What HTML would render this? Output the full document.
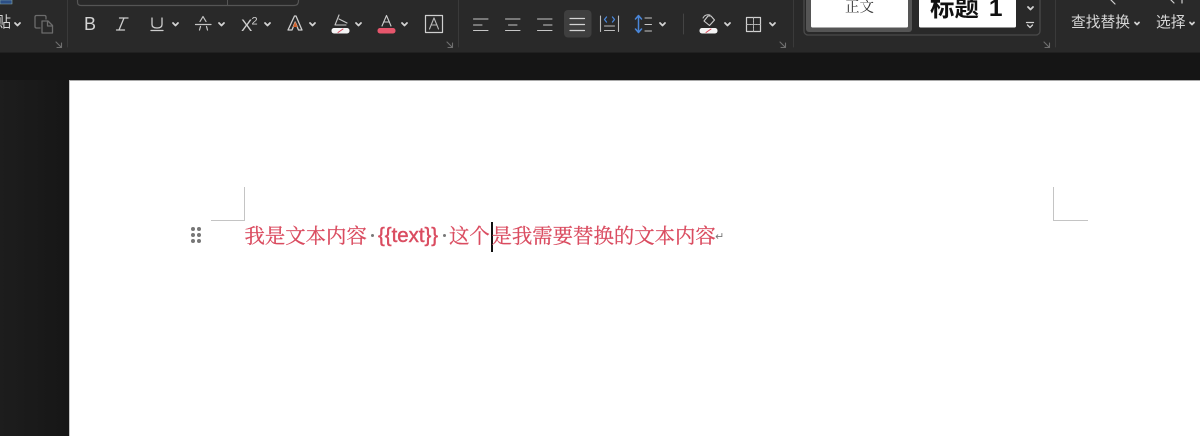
<!DOCTYPE html>
<html lang="zh">
<head>
<meta charset="utf-8">
<title>文档</title>
<style>
html,body{margin:0;padding:0;width:1200px;height:436px;overflow:hidden;background:#181818}
body{position:relative;font-family:"Liberation Sans","Noto Sans CJK SC",sans-serif}
.a{position:absolute;white-space:nowrap}
#bar{left:0;top:0;width:1200px;height:52px;background:#292929;border-bottom:1px solid #202020}
#gap{left:0;top:53px;width:1200px;height:27px;background:#151515}
#side{left:0;top:80px;width:69px;height:356px;background:linear-gradient(90deg,#1d1d1d,#191919 60%,#161616)}
#page{left:69px;top:80px;width:1131px;height:356px;background:#fff;border-top:1px solid #a9a9a9;border-left:1px solid #c5c5c5;box-sizing:border-box}
.t{color:#da4c60;font-family:"Liberation Serif","Noto Serif CJK SC",serif;font-size:20.4px;line-height:28px;top:223px;-webkit-text-stroke:.25px #da4c60}
.b{font-family:"Liberation Sans","Noto Sans CJK SC",sans-serif;font-size:20.4px;top:222px;color:#da4c60;line-height:28px;-webkit-text-stroke:.45px #da4c60}
.d{width:3px;height:3px;border-radius:50%;background:#777}
.ui{color:#d6d6d6;font-size:14.75px;line-height:20px}
svg{position:absolute;left:0;top:0}
</style>
</head>
<body>
<div class="a" id="bar"></div>
<div class="a" id="gap"></div>
<div class="a" id="side"></div>
<div class="a" id="page"></div>

<svg width="1200" height="90" viewBox="0 0 1200 90" fill="none" stroke-linecap="round" stroke-linejoin="round">
  <!-- separators -->
  <g stroke="#3a3a3a" stroke-width="1">
    <path d="M67.500 0V47M458.500 0V47M793.500 0V47M1055.500 0V47"/>
    <path d="M683.500 14V34" stroke="#444"/>
  </g>
  <!-- font box -->
  <path d="M77.500 0V2Q77.500 5.500 81 5.500H294Q298.500 5.500 298.500 1V0" stroke="#555" stroke-width="1.200"/>
  <path d="M227.500 0V5" stroke="#555"/>
  <!-- top-left stub -->
  <rect x="0" y="0" width="12" height="4" fill="#2c4f86" stroke="#8aa" stroke-width=".6"/>
  <!-- copy icon -->
  <g stroke="#6c6c6c" stroke-width="1.300">
    <path d="M40 28H36.500Q35 28 35 26.500V17Q35 15.500 36.500 15.500H44.500Q46 15.500 46 17V19"/>
    <path d="M42 21H48L52.500 25.500V33H42Z"/>
    <path d="M47.500 21V26H52.500"/>
  </g>
  <!-- dialog launchers -->
  <g stroke="#6f6f6f" stroke-width="1.100">
    <path d="M56 42L61.500 47.500M61.500 43V47.500H57"/>
    <path d="M447 42L452.500 47.500M452.500 43V47.500H448"/>
    <path d="M780 42L785.500 47.500M785.500 43V47.500H781"/>
    <path d="M1044 42L1049.500 47.500M1049.500 43V47.500H1045"/>
  </g>
  <!-- chevrons -->
  <g stroke="#d2d2d2" stroke-width="1.800">
    <path d="M15 23L17.500 25.500L20 23"/>
    <path d="M173 23L175.500 25.500L178 23"/>
    <path d="M219 23L221.500 25.500L224 23"/>
    <path d="M265 23L267.500 25.500L270 23"/>
    <path d="M310 23L312.500 25.500L315 23"/>
    <path d="M356 23L358.500 25.500L361 23"/>
    <path d="M402 23L404.500 25.500L407 23"/>
    <path d="M660 23L662.500 25.500L665 23"/>
    <path d="M725 23L727.500 25.500L730 23"/>
    <path d="M770 23L772.500 25.500L775 23"/>
    <path d="M1028 7L1030.500 9.500L1033 7"/>
    <path d="M1135 22.500L1137 24.500L1139 22.500"/>
    <path d="M1190 22.500L1192 24.500L1194 22.500"/>
  </g>
  <!-- italic -->
  <path d="M119 30L124 18M119.500 18H128M116.500 30H124.500" stroke="#cdcdcd" stroke-width="1.300"/>
  <!-- underline -->
  <path d="M152 18V24.500Q152 28 157 28Q162 28 162 24.500V18M151 30.500H163" stroke="#cdcdcd" stroke-width="1.300"/>
  <!-- strikethrough: split A -->
  <path d="M200 21.500L203 16.500L206 21.500M195.500 24.500H211M199.500 30L200.500 26.500M206.500 26.500L207.500 30" stroke="#c6c6c6" stroke-width="1.200"/>
  <!-- text effect A -->
  <path d="M288 30L294.500 16H296L302 30H298.500L295.200 22L292 30Z" stroke="#cfcfcf" stroke-width="1.300"/>
  <path d="M293 27L295.200 21.500L297.500 27Z" fill="#d4622a"/>
  <!-- highlighter -->
  <path d="M335 25L339 15M336 25H346M339 19L347 23" stroke="#c9c9c9" stroke-width="1.100"/>
  <rect x="331.500" y="28" width="18" height="5.500" rx="2.500" fill="#f4f4f4"/>
  <path d="M338 32.500L343 29" stroke="#d8475a" stroke-width="1"/>
  <!-- font color -->
  <path d="M382 26L386.500 15.500L391 26M383.500 22H389.500" stroke="#cfcfcf" stroke-width="1.100"/>
  <rect x="377.500" y="28" width="18" height="5.500" rx="2.500" fill="#e6566c"/>
  <!-- char border -->
  <rect x="425.500" y="15.500" width="17" height="17" stroke="#cfcfcf" stroke-width="1.200"/>
  <path d="M429.500 29L434 18L438.500 29M431 25H437" stroke="#b8b8b8" stroke-width="1.100"/>
  <!-- align -->
  <g stroke="#c6c6c6" stroke-width="1.100">
    <path d="M473.500 19H488M473.500 25H482M473.500 30.500H488"/>
    <path d="M505.500 19H520M508.500 25H517M505.500 30.500H520"/>
    <path d="M537.500 19H552M543.500 25H552M537.500 30.500H552"/>
  </g>
  <rect x="564" y="10" width="27.500" height="27.500" rx="4" fill="#3f3f3f"/>
  <path d="M570 18.500H584.500M570 24.500H584.500M570 30.500H584.500" stroke="#d4d4d4" stroke-width="1.200"/>
  <!-- distribute -->
  <path d="M600.500 16V31.500M618.500 16V31.500M604.500 26H614.500M604.500 30.500H614.500" stroke="#bdbdbd" stroke-width="1.100"/>
  <path d="M606.500 17L604.500 19.500L606.500 22M612.500 17L614.500 19.500L612.500 22" stroke="#4a86d8" stroke-width="1.300"/>
  <!-- line spacing -->
  <path d="M638.500 16V32M635.500 19L638.500 15.500L641.500 19M635.500 29L638.500 32.500L641.500 29" stroke="#4a86d8" stroke-width="1.500"/>
  <path d="M645 18H651.500M645 24.500H651.500M645 31H651.500" stroke="#c6c6c6" stroke-width="1.100"/>
  <!-- shading -->
  <path d="M704 21L708 16H711L714.500 20L709.500 25.500Z" stroke="#cdcdcd" stroke-width="1.100"/>
  <path d="M703 18Q705 14 710 15" stroke="#cdcdcd" stroke-width="1"/>
  <rect x="699.500" y="28" width="18" height="5.500" rx="2.500" fill="#f4f4f4"/>
  <path d="M706 32.500L711 29" stroke="#d8475a" stroke-width="1"/>
  <!-- borders -->
  <rect x="746.500" y="17.500" width="14" height="14" stroke="#d0d0d0" stroke-width="1.200"/>
  <path d="M753.500 17.500V31.500M746.500 24.500H760.500" stroke="#b9b9b9" stroke-width="1" stroke-dasharray="2 1"/>
  <!-- style gallery -->
  <rect x="804" y="-8" width="236" height="43" rx="4" stroke="#4a4a4a" stroke-width="1.300"/>
  <rect x="806" y="-8" width="106" height="40" rx="3" fill="#555"/>
  <rect x="811" y="-8" width="97" height="35.500" rx="1.500" fill="#fff"/>
  <rect x="919" y="-8" width="97" height="35.500" rx="1.500" fill="#fff"/>
  <path d="M1026.500 22.500H1033.500M1027.500 25L1030 27.500L1032.500 25" stroke="#d0d0d0" stroke-width="1.300"/>
  <!-- stubs of the icons above -->
  <path d="M1111 0L1115 4" stroke="#cfcfcf" stroke-width="1.200"/>
  <path d="M1171 0L1174 3M1182 0V3" stroke="#cfcfcf" stroke-width="1.200"/>
  <!-- B -->
  <text x="84" y="30" fill="#d4d4d4" font-family="Liberation Sans" font-size="18">B</text>
  <!-- X2 -->
  <text x="241" y="31" fill="#cfcfcf" font-family="Liberation Sans" font-size="17">X</text>
  <text x="251.500" y="24.500" fill="#cfcfcf" font-family="Liberation Sans" font-size="11">2</text>
</svg>

<div class="a ui" style="left:0;top:13px;width:11px;overflow:hidden;direction:rtl">贴</div>
<div class="a" style="left:845px;top:-3px;font:14.500px/18px 'Liberation Serif','Noto Serif CJK SC',serif;color:#333;padding-top:2px">正文</div>
<div class="a" style="left:930px;top:-6px;font:bold 24.500px/30px 'Liberation Sans','Noto Sans CJK SC',sans-serif;color:#111">标题 <span style="margin-left:3px">1</span></div>
<div class="a ui" style="left:1071px;top:13px">查找替换</div>
<div class="a ui" style="left:1156px;top:13px">选择</div>

<!-- crop marks -->
<div class="a" style="left:244px;top:187px;width:1px;height:33px;background:#c4c4c4"></div>
<div class="a" style="left:211px;top:220px;width:34px;height:1px;background:#c4c4c4"></div>
<div class="a" style="left:1053px;top:187px;width:1px;height:33px;background:#c4c4c4"></div>
<div class="a" style="left:1053px;top:220px;width:35px;height:1px;background:#c4c4c4"></div>

<!-- drag handle -->
<div class="a d" style="left:191px;top:227px;width:4px;height:4px;background:#777"></div>
<div class="a d" style="left:197px;top:227px;width:4px;height:4px;background:#777"></div>
<div class="a d" style="left:191px;top:233px;width:4px;height:4px;background:#777"></div>
<div class="a d" style="left:197px;top:233px;width:4px;height:4px;background:#777"></div>
<div class="a d" style="left:191px;top:239px;width:4px;height:4px;background:#777"></div>
<div class="a d" style="left:197px;top:239px;width:4px;height:4px;background:#777"></div>

<!-- text -->
<div class="a t" style="left:244.500px">我是文本内容</div>
<div class="a d" style="left:371px;top:234px"></div>
<div class="a b" style="left:378px">{{text}}</div>
<div class="a d" style="left:443px;top:234px"></div>
<div class="a t" style="left:449px">这个</div>
<div class="a" style="left:490.500px;top:222px;width:2.500px;height:30px;background:#111"></div>
<div class="a t" style="left:491.500px">是我需要替换的文本内容</div>
<div class="a" style="left:715px;top:230px;font:11px/14px 'DejaVu Sans',sans-serif;color:#777">↵</div>
</body>
</html>
